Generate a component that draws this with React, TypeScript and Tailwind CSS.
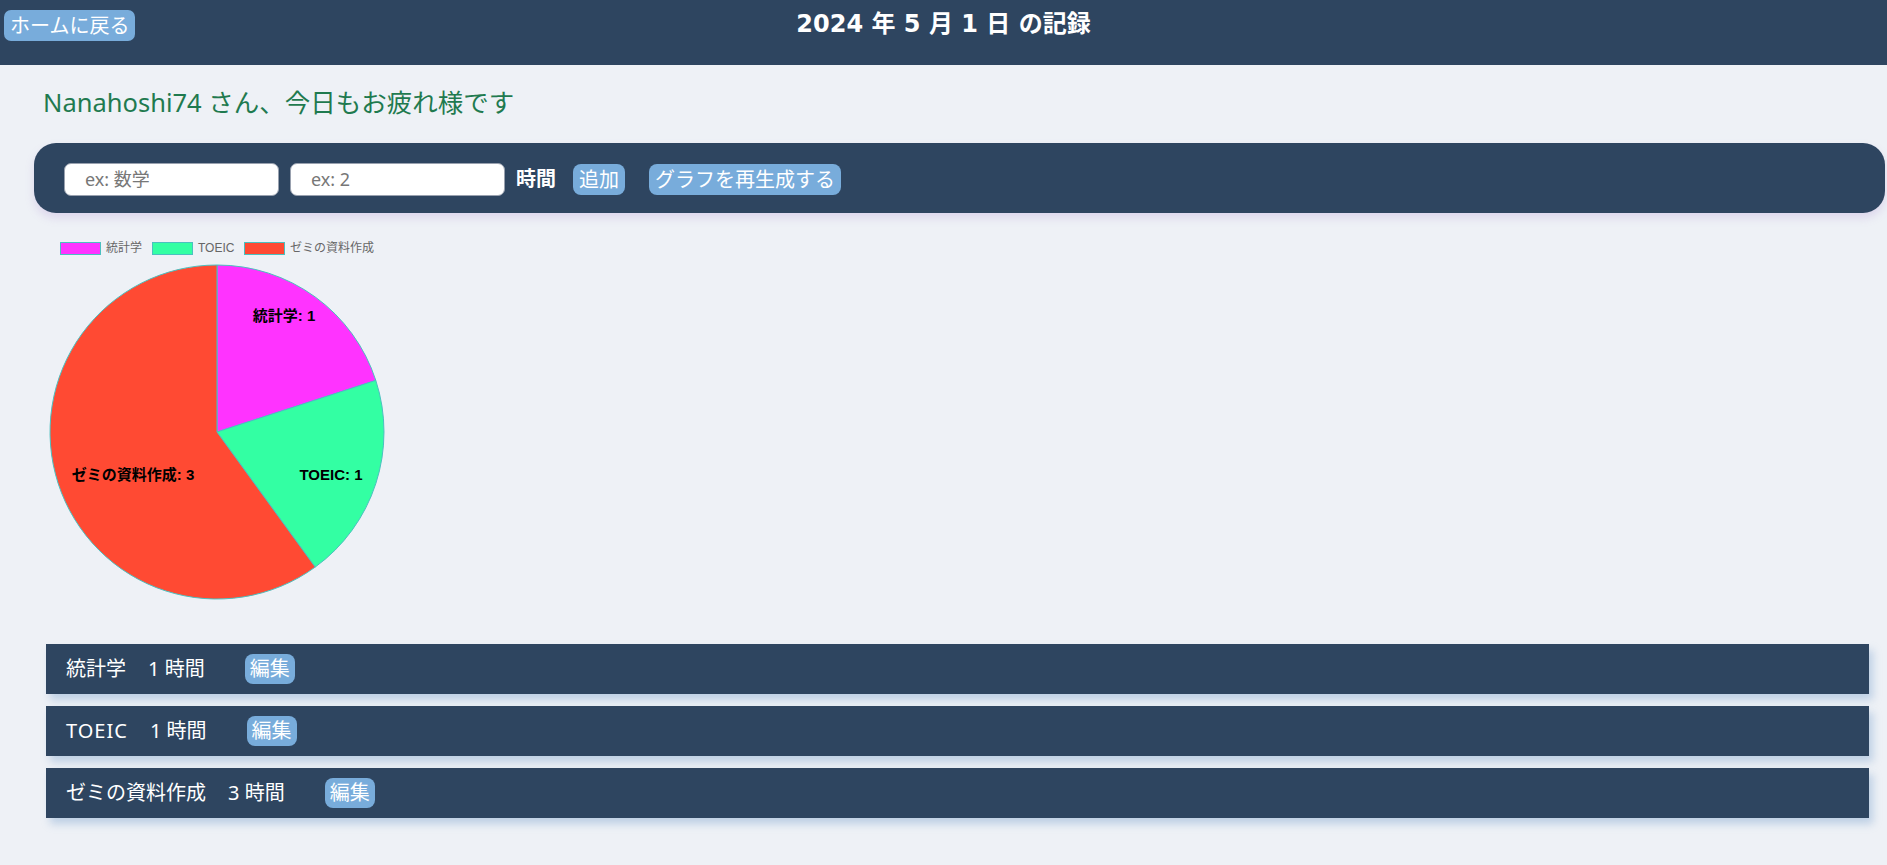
import { useState } from 'react';

const JP = '"Noto Sans", "Noto Sans CJK JP", sans-serif';

interface Record {
  name: string;
  hours: number;
}

const records: Record[] = [
  { name: '統計学', hours: 1 },
  { name: 'TOEIC', hours: 1 },
  { name: 'ゼミの資料作成', hours: 3 },
];

function PieChart() {
  // coordinates are page pixels, shifted by the svg's own offset
  const stroke = 'rgb(75,192,192)';
  const font = { fontFamily: '"Liberation Sans", "Noto Sans CJK JP", sans-serif' };
  return (
    <svg width={400} height={380} className="block">
      <g transform="translate(-20,-230)">
        <rect x={60.5} y={242.5} width={40} height={12} fill="#ff33ff" stroke={stroke} />
        <text x={106} y={249} fontSize={12} fill="#666" dominantBaseline="middle" style={font}>統計学</text>
        <rect x={152.5} y={242.5} width={40} height={12} fill="#33ffa3" stroke={stroke} />
        <text x={198} y={249} fontSize={12} fill="#666" dominantBaseline="middle" style={font}>TOEIC</text>
        <rect x={244.5} y={242.5} width={40} height={12} fill="#ff4a33" stroke={stroke} />
        <text x={290} y={249} fontSize={12} fill="#666" dominantBaseline="middle" style={font}>ゼミの資料作成</text>

        <path d="M217 432 L217 265 A167 167 0 0 1 375.8 380.4 Z" fill="#ff33ff" stroke={stroke} />
        <path d="M217 432 L375.8 380.4 A167 167 0 0 1 315.2 567.1 Z" fill="#33ffa3" stroke={stroke} />
        <path d="M217 432 L315.2 567.1 A167 167 0 1 1 217 265 Z" fill="#ff4a33" stroke={stroke} />

        <g fontSize={15} fontWeight="bold" fill="#000" textAnchor="middle" dominantBaseline="middle" style={font}>
          <text x={284} y={317}>統計学: 1</text>
          <text x={331} y={476}>TOEIC: 1</text>
          <text x={133} y={476}>ゼミの資料作成: 3</text>
        </g>
      </g>
    </svg>
  );
}

export default function App() {
  const [subject, setSubject] = useState('');
  const [hours, setHours] = useState('');

  return (
    <div className="min-h-[865px] bg-[#eef1f6] pb-10" style={{ fontFamily: JP }}>
      <header className="h-[65px] bg-[#2e4560] grid grid-cols-[1fr_auto_1fr] items-start">
        <div className="pl-[4px] pt-[10px]">
          <button className="h-[31px] px-[6px] rounded-[7px] bg-[#78acdb] text-white text-[20px] leading-[31px]">
            ホームに戻る
          </button>
        </div>
        <h1
          className="pt-[6px] text-white text-[24px] font-bold leading-9"
          style={{ fontFamily: '"DejaVu Sans", "Noto Sans CJK JP", sans-serif' }}
        >
          2024 年 5 月 1 日 の記録
        </h1>
        <div />
      </header>

      <p className="mt-[21px] ml-[43px] text-[25.5px] leading-8 text-[#1f7a4f]">
        Nanahoshi74 さん、今日もお疲れ様です
      </p>

      <div className="mt-[25px] ml-[34px] mr-[2px] h-[70px] rounded-[22px] bg-[#2e4560] shadow-[0_5px_8px_rgba(170,140,210,0.25)] flex items-center pl-[30px] pt-[2px]">
        <input
          value={subject}
          onChange={(e) => setSubject(e.target.value)}
          placeholder="ex: 数学"
          className="w-[215px] h-[33px] rounded-[7px] border border-gray-400 bg-white pl-[20px] text-[18px] text-gray-800 placeholder:text-[#777] outline-none"
        />
        <input
          value={hours}
          onChange={(e) => setHours(e.target.value)}
          placeholder="ex: 2"
          className="ml-[11px] w-[215px] h-[33px] rounded-[7px] border border-gray-400 bg-white pl-[20px] text-[18px] text-gray-800 placeholder:text-[#777] outline-none"
        />
        <span className="ml-[11px] text-white font-bold text-[20px]">時間</span>
        <button className="ml-[17px] h-[31px] px-[6px] rounded-[8px] bg-[#78acdb] text-white text-[20px] leading-[31px]">追加</button>
        <button className="ml-[24px] h-[31px] px-[6px] rounded-[8px] bg-[#78acdb] text-white text-[20px] leading-[31px]">グラフを再生成する</button>
      </div>

      <div className="mt-[17px] ml-[20px]">
        <PieChart />
      </div>

      <div className="mt-[34px] ml-[46px] mr-[18px] flex flex-col gap-[12px]">
        {records.map((r) => (
          <div
            key={r.name}
            className="h-[50px] bg-[#2e4560] flex items-center pl-[20px] text-white text-[20px] shadow-[4px_6px_8px_rgba(120,160,205,0.4)]"
          >
            <span className={r.name === 'TOEIC' ? 'tracking-[1px]' : ''}>{r.name}</span>
            <span className="ml-[22px]">{r.hours} 時間</span>
            <button className="ml-[40px] h-[30px] px-[5px] rounded-[8px] bg-[#78acdb] text-white text-[20px] leading-[30px]">
              編集
            </button>
          </div>
        ))}
      </div>
    </div>
  );
}
